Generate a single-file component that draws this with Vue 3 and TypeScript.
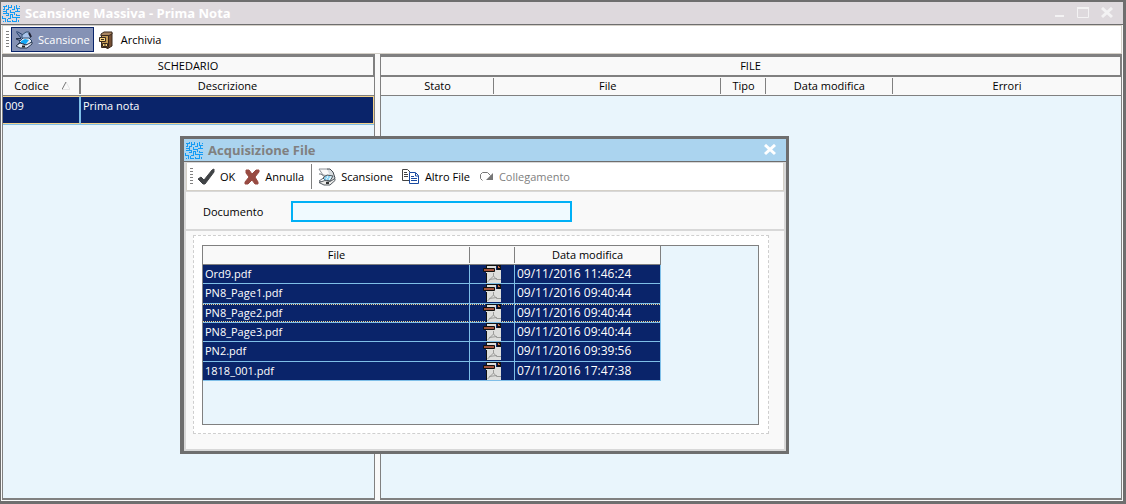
<script setup lang="ts">
import { ref } from 'vue'

interface FileRow {
  name: string
  modified: string
}

const files: FileRow[] = [
  { name: 'Ord9.pdf', modified: '09/11/2016 11:46:24' },
  { name: 'PN8_Page1.pdf', modified: '09/11/2016 09:40:44' },
  { name: 'PN8_Page2.pdf', modified: '09/11/2016 09:40:44' },
  { name: 'PN8_Page3.pdf', modified: '09/11/2016 09:40:44' },
  { name: 'PN2.pdf', modified: '09/11/2016 09:39:56' },
  { name: '1818_001.pdf', modified: '07/11/2016 17:47:38' },
]
const focused = ref(2)
const documento = ref('')
const mazePath =
  'M.5 2.500h4v-2M2.500 2.500v3h-2M6.500 .5v5h-2v3M9.500 .5v3h-3M9.500 5.500h3v-3h-1M14.500 .5v4h3M17.500 2.500h-1M.5 7.500h3M12.500 7.500h5M15.500 4.500v3M8.500 5.500v3h4v2M.5 9.500h6v2h-3M10.500 10.500h-2v4h-3M10.500 10.500v3h3M14.500 9.500v2h3M.5 11.500v3h3v3M.5 17.500h1M5.500 14.500v3h3M10.500 15.500v2h4v-4h3M16.500 15.500v2'
</script>

<template>
  <div class="window">
    <header class="titlebar">
      <svg class="maze" viewBox="0 0 18 18" aria-hidden="true"><path :d="mazePath" /></svg>
      <h1>Scansione Massiva - Prima Nota</h1>
      <div class="win-buttons">
        <button type="button" aria-label="Riduci">
          <svg width="12" height="12" viewBox="0 0 12 12"><path d="M2 9h9" stroke="#f3f2f3" stroke-width="2" /></svg>
        </button>
        <button type="button" aria-label="Ingrandisci">
          <svg width="12" height="12" viewBox="0 0 12 12"><path d="M.5 0v10.500h11V0" fill="none" stroke="#f3f2f3" /><path d="M0 1h12" stroke="#f3f2f3" stroke-width="2" /></svg>
        </button>
        <button type="button" aria-label="Chiudi">
          <svg width="12" height="12" viewBox="0 0 12 12"><path d="M1 1l10 9M11 1L1 10" stroke="#f3f2f3" stroke-width="3" /></svg>
        </button>
      </div>
    </header>

    <nav class="toolbar main-toolbar">
      <span class="grip"></span>
      <button type="button" class="tool pressed">
        <svg width="18" height="18" viewBox="0 0 18 18" aria-hidden="true">
          <path d="M1 1h2l5 3M2 2l4 5" fill="none" stroke="#24406e" />
          <path d="M7 4l4-3h3l2 5-4 3-5-2z" fill="#a9c3ea" stroke="#33506e" />
          <path d="M14 2l2 4" stroke="#223" stroke-width="2" />
          <path d="M1 7.500h5M1 8l5 2-5 5" fill="none" stroke="#26344c" />
          <path d="M4 11l4-4 6 0 3 3-4 4z" fill="#e6edf5" stroke="#2e4a6c" />
          <path d="M6 10l4-2 4 1-3 4-5-1z" fill="#12a8f6" />
          <path d="M1 15l4-3 6 2 6-3v2l-5 4H5z" fill="#e4ecf8" stroke="#2b3a52" />
          <path d="M7 15.500h3" stroke="#222" stroke-width="2" />
        </svg>
        Scansione
      </button>
      <button type="button" class="tool">
        <svg width="18" height="18" viewBox="0 0 18 18" aria-hidden="true">
          <path d="M9 4l5-2v13l-5 3z" fill="#765034" stroke="#3a2a1e" />
          <path d="M3 3l3-2h8v2l-4 2H3z" fill="#a98560" stroke="#3a2a1e" />
          <path d="M3.500 4.500h7v12h-7z" fill="#c39a55" stroke="#3a2a1e" />
          <path d="M1.500 6.500h6v4h-6zM4.500 12.500h5v3h-5z" fill="#f6d37c" stroke="#3a2a1e" />
          <path d="M3 8.500h3M6 14h2" stroke="#3a2a1e" />
        </svg>
        Archivia
      </button>
    </nav>

    <main class="panes">
      <section class="pane">
        <h2>SCHEDARIO</h2>
        <table class="left-table">
          <colgroup><col class="c-code" /><col /></colgroup>
          <thead>
            <tr>
              <th>
                Codice
                <svg class="sort" width="8" height="8" viewBox="0 0 8 8" aria-hidden="true"><path d="M4 0l4 7.500H0" fill="none" stroke="#e4e4e4" /><path d="M0 7.500L4 0" stroke="#777" /></svg>
              </th>
              <th>Descrizione</th>
            </tr>
          </thead>
          <tbody>
            <tr><td>009</td><td>Prima nota</td></tr>
          </tbody>
        </table>
      </section>
      <section class="pane">
        <h2>FILE</h2>
        <table class="right-table">
          <colgroup><col class="c-stato" /><col class="c-file" /><col class="c-tipo" /><col class="c-data" /><col /></colgroup>
          <thead>
            <tr><th>Stato</th><th>File</th><th>Tipo</th><th>Data modifica</th><th>Errori</th></tr>
          </thead>
        </table>
      </section>
    </main>

    <div class="dialog" role="dialog" aria-labelledby="dialog-title">
      <header class="titlebar dialog-title">
        <svg class="maze" viewBox="0 0 18 18" aria-hidden="true"><path :d="mazePath" /></svg>
        <h2 id="dialog-title">Acquisizione File</h2>
        <div class="win-buttons">
          <button type="button" aria-label="Chiudi">
            <svg width="12" height="12" viewBox="0 0 12 12"><path d="M1 1l10 9M11 1L1 10" stroke="#fff" stroke-width="3" /></svg>
          </button>
        </div>
      </header>
      <div class="dialog-inner">
        <nav class="toolbar dialog-toolbar">
          <span class="grip"></span>
          <button type="button" class="tool">
            <svg width="18" height="18" viewBox="0 0 18 18" aria-hidden="true"><path d="M1 11l3-2 3 3L15 2l2-1v3L8 16H6z" fill="#404346" stroke="#404346" /></svg>
            OK
          </button>
          <button type="button" class="tool">
            <svg width="16" height="18" viewBox="0 0 16 18" aria-hidden="true"><path d="M2 2h3l3 4 4-4h3v2l-4 5 3 5v2h-3l-3-4-4 4H1v-2l4-5-3-4z" fill="#984b42" stroke="#984b42" /></svg>
            Annulla
          </button>
          <span class="divider"></span>
          <button type="button" class="tool">
            <svg width="18" height="18" viewBox="0 0 18 18" aria-hidden="true">
              <path d="M1 1h8l5 4-3 3-6-1z" fill="#fafafa" stroke="#8c9298" />
              <path d="M9 1h3l3 3 2 6-3 3" fill="#d9dde0" stroke="#444b52" />
              <path d="M1 6h2l4 3-6 4 2 1h4" fill="#fff" stroke="#6b7278" />
              <path d="M5 10l4-3 6 1-3 5-5-1z" fill="#d6f1fc" stroke="#4a5259" />
              <path d="M7 9h5M6 11h6" stroke="#4ab7ea" stroke-dasharray="2 1" />
              <path d="M1 14.500l6-2 5 1 5-3v2l-5 4.500H6z" fill="#ececea" stroke="#555c63" />
              <path d="M8 15h3" stroke="#333" stroke-width="2" />
            </svg>
            Scansione
          </button>
          <button type="button" class="tool">
            <svg width="18" height="18" viewBox="0 0 18 18" aria-hidden="true">
              <path d="M.5 1.500h5l3 3v8h-8z" fill="#fff" stroke="#444" />
              <path d="M2 4.500h3M2 6.500h4M2 8.500h4" stroke="#444" />
              <path d="M7.500 4.500h6l3 3v8h-9z" fill="#fff" stroke="#1949a0" />
              <path d="M13.500 5v3h3M9 8.500h3M9 10.500h6M9 12.500h6" fill="none" stroke="#1949a0" />
            </svg>
            Altro File
          </button>
          <button type="button" class="tool" disabled>
            <svg width="15" height="12" viewBox="0 0 15 12" aria-hidden="true"><path d="M3.500 9.500L1.500 7.500v-4l2-2h5l3 3" fill="none" stroke="#777" /><path d="M14 2v7H7z" fill="#777" /></svg>
            Collegamento
          </button>
        </nav>
        <form class="doc-row" @submit.prevent>
          <label for="documento">Documento</label>
          <input id="documento" v-model="documento" type="text" />
        </form>
        <div class="drop-area">
          <div class="grid-box">
            <table class="file-table">
              <colgroup><col class="f-name" /><col class="f-icon" /><col class="f-date" /></colgroup>
              <thead>
                <tr><th>File</th><th></th><th>Data modifica</th></tr>
              </thead>
              <tbody>
                <tr v-for="(f, i) in files" :key="f.name" :class="{ focused: i === focused }" @click="focused = i">
                  <td>{{ f.name }}</td>
                  <td class="icon-cell">
                    <svg width="18" height="18" viewBox="0 0 18 18" aria-hidden="true">
                      <path d="M3 1h10v4h5v13H3z" fill="#dededc" />
                      <path d="M3.500 0v3M3 .5h11.500v4H18M3.500 8v10" fill="none" stroke="#111" />
                      <path d="M15 0h3v4h-3z" fill="#111" />
                      <path d="M15 1h1v1h1v1h-2z" fill="#c46a4d" />
                      <path d="M10.500 8v3l-6 6M10.500 11l3 3.500H18M6 14.500l8-1" fill="none" stroke="#9b9b99" />
                      <path d="M.5 3.500h11v3H.5z" fill="#a0523c" stroke="#111" />
                    </svg>
                  </td>
                  <td>{{ f.modified }}</td>
                </tr>
              </tbody>
            </table>
          </div>
        </div>
      </div>
    </div>
  </div>
</template>

<style>
body {
  margin: 0;
}
</style>

<style scoped>
* {
  box-sizing: border-box;
}
.window {
  position: relative;
  display: flex;
  flex-direction: column;
  min-height: 100vh;
  border: 2px solid #6e6e6e;
  border-left-width: 1px;
  border-right-width: 3px;
  border-bottom-width: 3px;
  background: #f9f9f9;
  color: #000;
  font: 11px/18px "Open Sans", "Noto Sans", sans-serif;
}
.titlebar {
  display: flex;
  align-items: center;
  gap: 5px;
  height: 23px;
  padding: 0 10px 0 1px;
  border-bottom: 1px solid #6e6e6e;
  background: #ded9dd;
}
.titlebar h1,
.titlebar h2 {
  flex: 1;
  margin: 0;
  color: #fff;
  font: bold 13px/20px "Open Sans", "Noto Sans", sans-serif;
}
.maze {
  width: 18px;
  height: 18px;
}
.maze path {
  fill: none;
  stroke: #129bf5;
  stroke-width: 1;
  shape-rendering: crispEdges;
}
.win-buttons {
  display: flex;
  gap: 12px;
}
button {
  display: flex;
  align-items: center;
  padding: 0;
  border: 0;
  background: none;
  color: inherit;
  font: inherit;
}
.toolbar {
  display: flex;
  align-items: center;
  border: 1px solid #d4d0c8;
  background: #fff;
}
.main-toolbar {
  height: 29px;
  margin: 0 1px;
  padding-left: 3px;
}
.grip {
  width: 3px;
  height: 18px;
  background: repeating-linear-gradient(#808080 0 1px, transparent 1px 3px);
}
.tool {
  gap: 5px;
  height: 25px;
  padding: 0 4px;
}
.pressed {
  margin: 0 0 0 2px;
  padding: 0 3px;
  border: 1px solid #0a246a;
  background: #8592b5;
  color: #fff;
}
.tool:disabled {
  color: #808080;
}
.panes {
  flex: 1;
  display: grid;
  grid-template-columns: 373fr 742fr;
  gap: 5px;
  margin: 0 1px 1px;
}
.pane {
  border: 1px solid #808080;
  border-bottom-width: 2px;
  background: #e9f5fc;
}
.pane h2 {
  margin: 0;
  border: 1px solid #808080;
  border-width: 2px 1px 2px 0;
  background: #f9f9f9;
  font-size: 11px;
  font-weight: normal;
  line-height: 18px;
  text-align: center;
}
table {
  width: 100%;
  table-layout: fixed;
  border-collapse: separate;
  border-spacing: 0;
}
th {
  height: 19px;
  padding: 0;
  border-bottom: 1px solid #808080;
  background: linear-gradient(#808080, #808080) right center / 1px 16px no-repeat #f9f9f9;
  font-weight: normal;
  line-height: 18px;
}
th:last-child {
  background: #f9f9f9;
}
.left-table th:first-child {
  background-size: 2px 16px;
}
.sort {
  margin-left: 10px;
}
.c-code {
  width: 78px;
}
.c-stato {
  width: 15.3%;
}
.c-file {
  width: 30.7%;
}
.c-tipo {
  width: 6%;
}
.c-data {
  width: 17.2%;
}
td {
  background: #0a246a;
  color: #fff;
  vertical-align: top;
}
.left-table td {
  height: 28px;
  padding: 0 2px;
  border: 1px solid #f3d28b;
  border-right: 2px solid #7fbfe8;
  border-left: 0;
  box-shadow: 0 1px #7fbfe8;
}
.left-table td:last-child {
  border-right: 1px solid #f3d28b;
}
.dialog {
  position: absolute;
  top: 134px;
  left: 179px;
  width: 609px;
  border: 3px solid #6e6e6e;
  border-left-width: 4px;
  background: #f9f9f9;
}
.dialog-title {
  background: #abd4ef;
}
.dialog-title h2 {
  color: #808080;
}
.dialog-inner {
  border: 1px solid #d8d8d8;
  border-width: 1px 2px 2px;
}
.dialog-toolbar {
  height: 28px;
  padding-left: 3px;
  border-top: 0;
}
.dialog-toolbar .tool {
  padding: 0 5px 0 4px;
}
.divider {
  width: 1px;
  height: 25px;
  margin: 0 2px;
  background: #808080;
}
.doc-row {
  display: flex;
  align-items: center;
  height: 40px;
  padding: 2px 0 0 17px;
  border-top: 1px solid #d8d8d8;
  border-bottom: 2px solid #d8d8d8;
}
.doc-row label {
  width: 88px;
}
.doc-row input {
  width: 281px;
  height: 21px;
  padding: 0 4px;
  border: 2px solid #00b0f6;
  background: #f0faff;
  font: inherit;
}
.drop-area {
  margin: 4px 15px 15px 7px;
  padding: 9px 9px 8px 8px;
  border: 1px dashed #cfcfcf;
  background: #fff;
}
.grid-box {
  min-height: 180px;
  border: 1px solid #808080;
  background: #e9f5fc;
}
.file-table {
  width: 458px;
  height: 135px;
}
.f-icon {
  width: 45px;
}
.f-date {
  width: 146px;
}
.file-table th:last-child {
  border-right: 1px solid #808080;
}
.file-table td {
  height: 19px;
  padding: 0 2px;
  border-right: 1px solid #7fbfe8;
  border-bottom: 1px solid #7fbfe8;
  font-size: 12px;
  line-height: 18px;
}
.file-table td:first-child {
  font-size: 11px;
}
.file-table .icon-cell {
  text-align: center;
}
.icon-cell svg {
  display: block;
  margin: 0 auto;
}
.focused td {
  background-image: linear-gradient(90deg, #f3d28b 1px, transparent 1px), linear-gradient(90deg, #f3d28b 1px, transparent 1px);
  background-position: top left, bottom left;
  background-repeat: repeat-x;
  background-size: 2px 1px;
}
</style>
